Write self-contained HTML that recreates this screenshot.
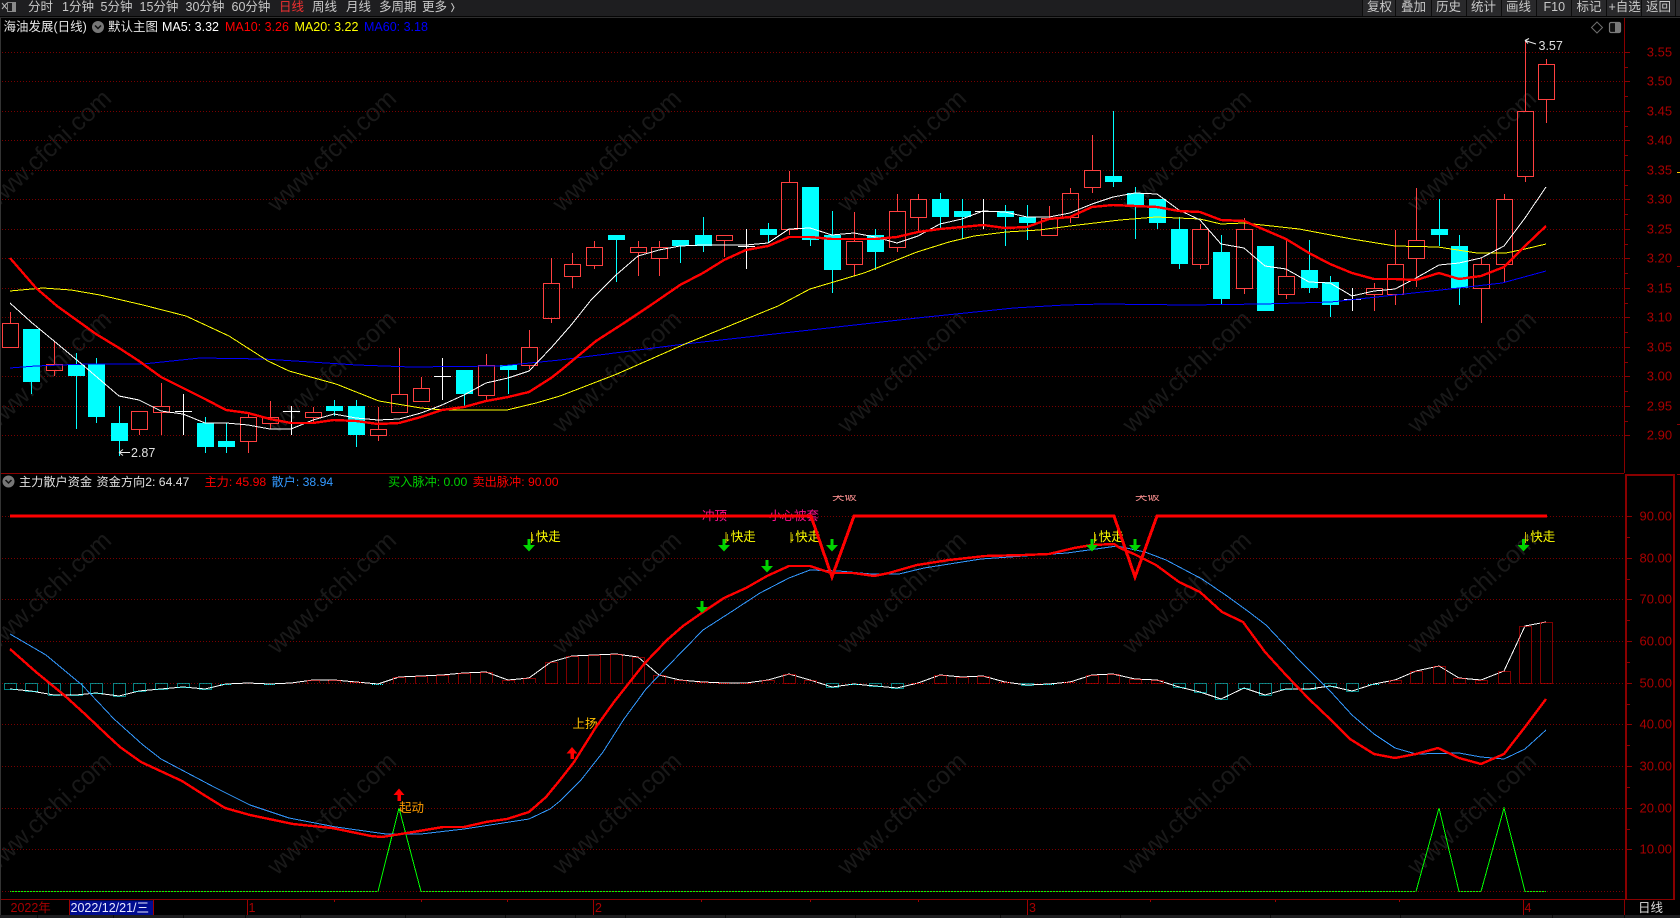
<!DOCTYPE html>
<html lang="zh-CN">
<head>
<meta charset="utf-8">
<title>海油发展(日线)</title>
<style>
html,body{margin:0;padding:0;background:#000;width:1680px;height:918px;overflow:hidden}
svg{display:block;position:absolute;left:0;top:0}
text{font-family:"Liberation Sans","Noto Sans CJK SC",sans-serif;font-size:12.5px;white-space:pre}
.c{shape-rendering:crispEdges}
.tb{fill:#c9c9c9}
.ax{fill:#a80000;font-size:13px}
.wm{fill:#191919;font-size:25px}
.st{font-size:12.2px}
</style>
</head>
<body>
<svg width="1680" height="918" viewBox="0 0 1680 918" xmlns="http://www.w3.org/2000/svg">
<rect width="1680" height="918" fill="#000"/>

<!-- watermarks -->
<g class="wm">
<text class="wm" transform="translate(-8 213) rotate(-43)">www.cfchi.com</text>
<text class="wm" transform="translate(277 213) rotate(-43)">www.cfchi.com</text>
<text class="wm" transform="translate(562 213) rotate(-43)">www.cfchi.com</text>
<text class="wm" transform="translate(847 213) rotate(-43)">www.cfchi.com</text>
<text class="wm" transform="translate(1132 213) rotate(-43)">www.cfchi.com</text>
<text class="wm" transform="translate(1417 213) rotate(-43)">www.cfchi.com</text>
<text class="wm" transform="translate(-8 434) rotate(-43)">www.cfchi.com</text>
<text class="wm" transform="translate(277 434) rotate(-43)">www.cfchi.com</text>
<text class="wm" transform="translate(562 434) rotate(-43)">www.cfchi.com</text>
<text class="wm" transform="translate(847 434) rotate(-43)">www.cfchi.com</text>
<text class="wm" transform="translate(1132 434) rotate(-43)">www.cfchi.com</text>
<text class="wm" transform="translate(1417 434) rotate(-43)">www.cfchi.com</text>
<text class="wm" transform="translate(-8 655) rotate(-43)">www.cfchi.com</text>
<text class="wm" transform="translate(277 655) rotate(-43)">www.cfchi.com</text>
<text class="wm" transform="translate(562 655) rotate(-43)">www.cfchi.com</text>
<text class="wm" transform="translate(847 655) rotate(-43)">www.cfchi.com</text>
<text class="wm" transform="translate(1132 655) rotate(-43)">www.cfchi.com</text>
<text class="wm" transform="translate(1417 655) rotate(-43)">www.cfchi.com</text>
<text class="wm" transform="translate(-8 876) rotate(-43)">www.cfchi.com</text>
<text class="wm" transform="translate(277 876) rotate(-43)">www.cfchi.com</text>
<text class="wm" transform="translate(562 876) rotate(-43)">www.cfchi.com</text>
<text class="wm" transform="translate(847 876) rotate(-43)">www.cfchi.com</text>
<text class="wm" transform="translate(1132 876) rotate(-43)">www.cfchi.com</text>
<text class="wm" transform="translate(1417 876) rotate(-43)">www.cfchi.com</text>
</g>

<!-- grid -->
<path class="c" stroke="#780000" stroke-width="1" stroke-dasharray="1 2" fill="none" d="M2 52.5H1624M2 81.5H1624M2 111.5H1624M2 140.5H1624M2 170.5H1624M2 199.5H1624M2 229.5H1624M2 258.5H1624M2 288.5H1624M2 317.5H1624M2 347.5H1624M2 376.5H1624M2 406.5H1624M2 435.5H1624M2 516.5H1624M2 558.5H1624M2 599.5H1624M2 641.5H1624M2 683.5H1624M2 724.5H1624M2 766.5H1624M2 808.5H1624M2 849.5H1624"/>

<!-- red candles -->
<path class="c" fill="none" stroke="#ff4040" stroke-width="1" d="
M10.5 312V323M2.5 323.5h16v24h-16z
M54.5 342V364M54.5 370V376M46.5 364.5h16v6h-16z
M139.5 429V435M131.5 411.5h16v18h-16z
M161.5 383V406M161.5 412V435M153.5 406.5h16v6h-16z
M248.5 413V417M248.5 441V453M240.5 417.5h16v24h-16z
M270.5 401V417M270.5 423V429M262.5 417.5h16v6h-16z
M313.5 407V412M313.5 417V423M305.5 412.5h16v5h-16z
M378.5 407V429M378.5 435V441M370.5 429.5h16v6h-16z
M399.5 348V394M391.5 394.5h16v18h-16z
M421.5 377V388M413.5 388.5h16v13h-16z
M486.5 354V365M486.5 395V401M478.5 365.5h16v30h-16z
M529.5 330V347M529.5 365V369M521.5 347.5h16v18h-16z
M551.5 258V283M551.5 318V323M543.5 283.5h16v35h-16z
M572.5 253V264M572.5 276V288M564.5 264.5h16v12h-16z
M594.5 241V247M594.5 265V269M586.5 247.5h16v18h-16z
M638.5 241V247M638.5 252V276M630.5 247.5h16v5h-16z
M659.5 241V247M659.5 258V276M651.5 247.5h16v11h-16z
M724.5 240V257M716.5 235.5h16v5h-16z
M789.5 171V182M789.5 229V235M781.5 182.5h16v47h-16z
M854.5 212V241M854.5 264V276M846.5 241.5h16v23h-16z
M897.5 194V211M897.5 247V252M889.5 211.5h16v36h-16z
M918.5 194V199M918.5 217V233M910.5 199.5h16v18h-16z
M1049.5 206V218M1041.5 218.5h16v17h-16z
M1070.5 188V193M1070.5 217V223M1062.5 193.5h16v24h-16z
M1092.5 135V170M1092.5 187V193M1084.5 170.5h16v17h-16z
M1200.5 224V229M1200.5 264V269M1192.5 229.5h16v35h-16z
M1244.5 218V229M1244.5 288V294M1236.5 229.5h16v59h-16z
M1286.5 240V276M1286.5 294V299M1278.5 276.5h16v18h-16z
M1374.5 283V288M1374.5 294V311M1366.5 288.5h16v6h-16z
M1395.5 230V264M1395.5 294V305M1387.5 264.5h16v30h-16z
M1416.5 188V240M1416.5 258V287M1408.5 240.5h16v18h-16z
M1481.5 258V264M1481.5 288V323M1473.5 264.5h16v24h-16z
M1504.5 194V199M1504.5 264V282M1496.5 199.5h16v65h-16z
M1525.5 40V111M1525.5 176V182M1517.5 111.5h16v65h-16z
M1546.5 59V64M1546.5 99V123M1538.5 64.5h16v35h-16z"/>

<!-- cyan candle wicks -->
<path class="c" fill="none" stroke="#00ffff" stroke-width="1" d="M31.5 382V394M76.5 353V429M96.5 358V423M119.5 406V456M205.5 417V453M226.5 423V453M334.5 400V416M356.5 400V447M464.5 394V406M508.5 370V394M616.5 240V282M680.5 246V263M703.5 217V252M768.5 223V243M810.5 240V246M832.5 211V293M875.5 229V270M940.5 193V228M962.5 199V239M1005.5 205V246M1027.5 205V240M1113.5 111V187M1135.5 187V239M1157.5 223V229M1179.5 217V269M1221.5 235V305M1309.5 240V293M1330.5 276V317M1439.5 199V246M1459.5 235V305"/>
<!-- cyan candle bodies -->
<path class="c" fill="#00ffff" d="M23 329h17v53h-17zM68 365h17v11h-17zM88 364h17v53h-17zM111 423h17v18h-17zM197 423h17v24h-17zM218 441h17v6h-17zM326 406h17v5h-17zM348 406h17v29h-17zM456 370h17v24h-17zM500 365h17v5h-17zM608 235h17v5h-17zM672 240h17v6h-17zM695 235h17v11h-17zM760 229h17v6h-17zM802 187h17v53h-17zM824 235h17v35h-17zM867 235h17v17h-17zM932 199h17v18h-17zM954 211h17v6h-17zM997 211h17v6h-17zM1019 217h17v6h-17zM1105 176h17v6h-17zM1127 193h17v12h-17zM1149 199h17v24h-17zM1171 229h17v35h-17zM1213 252h17v47h-17zM1257 246h17v65h-17zM1301 270h17v18h-17zM1322 282h17v23h-17zM1431 229h17v6h-17zM1451 246h17v42h-17z"/>
<!-- white cross candles -->
<path class="c" fill="none" stroke="#ffffff" stroke-width="1" d="M183.5 394V435M175 411.5h17M291.5 406V435M283 411.5h17M442.5 358V400M434 376.5h17M746.5 229V269M738 246.5h17M983.5 199V229M975 211.5h17M1352.5 288V311M1344 299.5h17"/>

<!-- MA60 -->
<polyline class="c" fill="none" stroke="#0000ff" stroke-width="1" points="10,368 36,366 86,364 143,364 200,358 264,359 357,365 411,367 500,366 560,360 685,344 846,326 917,318 1014,308 1065,305 1103,304 1188,305 1263,304 1331,302 1395,295 1459,288 1502,283 1546,271"/>
<!-- MA20 -->
<polyline class="c" fill="none" stroke="#ffff00" stroke-width="1" points="10,291 43,288 71,290 100,295 143,305 186,316 229,336 268,361 289,371 336,384 379,401 421,408 443,410 507,410 536,403 560,396 617,374 685,344 778,306 810,289 864,273 917,252 949,242 974,236 1006,232 1039,230 1078,225 1120,220 1156,217 1200,219 1221,224 1244,223 1299,229 1352,239 1395,246 1438,247 1477,253 1506,253 1525,249 1546,244"/>
<!-- MA5 -->
<polyline class="c" fill="none" stroke="#ffffff" stroke-width="1" points="10,303 31,322 54,341 84,366 119,396 139,400 161,411 183,414 205,423 226,423 248,425 270,429 291,429 313,420 334,414 356,418 378,420 399,419 421,413 442,405 464,395 486,383 508,378 529,371 551,348 572,324 591,300 616,275 638,256 659,250 680,246 703,245 724,245 746,245 768,243 789,229 810,228 832,235 854,233 875,237 897,243 918,236 940,224 962,219 983,211 1005,212 1027,217 1049,217 1070,213 1092,204 1113,197 1135,193 1157,194 1179,210 1200,220 1221,244 1244,248 1265,266 1286,269 1309,282 1330,283 1352,296 1374,291 1395,289 1416,278 1439,265 1459,263 1481,258 1504,246 1525,218 1546,187"/>
<!-- MA10 -->
<polyline class="c" fill="none" stroke="#ff0000" stroke-width="2.4" stroke-linejoin="round" points="10,258 36,288 57,306 96,334 119,348 139,361 161,377 183,388 205,399 226,410 248,413 270,419 291,423 313,423 334,420 356,421 378,424 399,423 421,417 442,410 464,407 486,401 508,397 529,392 551,378 560,371 578,356 596,341 624,323 651,305 680,285 703,273 724,260 746,250 768,246 789,237 810,237 832,239 854,239 875,239 897,237 918,232 940,229 962,227 983,225 1005,228 1027,227 1049,219 1070,217 1092,207 1113,205 1135,206 1157,207 1179,211 1200,212 1221,220 1244,221 1265,230 1286,239 1309,253 1330,264 1352,273 1374,279 1395,279 1416,280 1439,273 1459,279 1481,276 1504,267 1525,246 1546,226"/>

<!-- extremes -->
<path fill="none" stroke="#e8e8e8" stroke-width="1" d="M1525 40.5L1536 44M1525 40.5l4-2M1525 40.5l3 3M119 452.5H130M119 452.5l4-3M119 452.5l4 3"/>
<text x="1538.5" y="50" fill="#e0e0e0">3.57</text>
<text x="131" y="457" fill="#e0e0e0">2.87</text>

<!-- lower panel: white direction line and dotted bars -->
<polyline class="c" fill="none" stroke="#ffffff" stroke-width="1" points="10,689 31,691 54,695 76,695 96,693 119,696 139,691 161,689 183,687 205,689 226,684 248,683 270,684 291,683 313,680 334,680 356,682 378,684 399,677 421,676 442,675 464,673 486,672 508,680 529,678 551,662 572,656 594,655 616,654 638,657 659,675 680,680 703,682 724,683 746,683 768,680 789,674 810,680 832,687 854,684 875,686 897,688 918,683 940,675 962,677 983,676 1005,682 1027,685 1049,684 1070,682 1092,675 1113,674 1135,679 1157,680 1179,687 1200,692 1221,699 1244,688 1265,695 1286,689 1309,689 1330,686 1352,691 1374,684 1395,680 1416,671 1439,666 1459,678 1481,680 1504,671 1525,626 1546,622"/>
<path class="c" fill="none" stroke="#00ffff" stroke-width="1" stroke-dasharray="1 1" d="M4.5 683.5V689.5H16.5V683.5H4.5M25.5 683.5V691.5H37.5V683.5H25.5M48.5 683.5V695.5H60.5V683.5H48.5M70.5 683.5V695.5H82.5V683.5H70.5M90.5 683.5V693.5H102.5V683.5H90.5M113.5 683.5V696.5H125.5V683.5H113.5M133.5 683.5V691.5H145.5V683.5H133.5M155.5 683.5V689.5H167.5V683.5H155.5M177.5 683.5V687.5H189.5V683.5H177.5M199.5 683.5V689.5H211.5V683.5H199.5M220 684.5H232M264 684.5H276M372 684.5H384M826.5 683.5V687.5H838.5V683.5H826.5M848 684.5H860M869.5 683.5V686.5H881.5V683.5H869.5M891.5 683.5V688.5H903.5V683.5H891.5M1021.5 683.5V685.5H1033.5V683.5H1021.5M1043 684.5H1055M1173.5 683.5V687.5H1185.5V683.5H1173.5M1194.5 683.5V692.5H1206.5V683.5H1194.5M1215.5 683.5V699.5H1227.5V683.5H1215.5M1238.5 683.5V688.5H1250.5V683.5H1238.5M1259.5 683.5V695.5H1271.5V683.5H1259.5M1280.5 683.5V689.5H1292.5V683.5H1280.5M1303.5 683.5V689.5H1315.5V683.5H1303.5M1324.5 683.5V686.5H1336.5V683.5H1324.5M1346.5 683.5V691.5H1358.5V683.5H1346.5M1368 684.5H1380"/>
<path class="c" fill="none" stroke="#ff0000" stroke-width="1" stroke-dasharray="1 1" d="M307.5 683.5V680.5H319.5V683.5M328.5 683.5V680.5H340.5V683.5M350 682.5H362M393.5 683.5V677.5H405.5V683.5M415.5 683.5V676.5H427.5V683.5M436.5 683.5V675.5H448.5V683.5M458.5 683.5V673.5H470.5V683.5M480.5 683.5V672.5H492.5V683.5M502.5 683.5V680.5H514.5V683.5M523.5 683.5V678.5H535.5V683.5M545.5 683.5V662.5H557.5V683.5H545.5M566.5 683.5V656.5H578.5V683.5H566.5M588.5 683.5V655.5H600.5V683.5H588.5M610.5 683.5V654.5H622.5V683.5H610.5M632.5 683.5V657.5H644.5V683.5H632.5M653.5 683.5V675.5H665.5V683.5H653.5M674.5 683.5V680.5H686.5V683.5M697 682.5H709M718 683.5H730M740 683.5H752M762.5 683.5V680.5H774.5V683.5M783.5 683.5V674.5H795.5V683.5H783.5M804.5 683.5V680.5H816.5V683.5M912 683.5H924M934.5 683.5V675.5H946.5V683.5H934.5M956.5 683.5V677.5H968.5V683.5M977.5 683.5V676.5H989.5V683.5H977.5M999 682.5H1011M1064 682.5H1076M1086.5 683.5V675.5H1098.5V683.5H1086.5M1107.5 683.5V674.5H1119.5V683.5H1107.5M1129.5 683.5V679.5H1141.5V683.5H1129.5M1151.5 683.5V680.5H1163.5V683.5H1151.5M1389.5 683.5V680.5H1401.5V683.5H1389.5M1410.5 683.5V671.5H1422.5V683.5H1410.5M1433.5 683.5V666.5H1445.5V683.5H1433.5M1453.5 683.5V678.5H1465.5V683.5H1453.5M1475.5 683.5V680.5H1487.5V683.5H1475.5M1498.5 683.5V671.5H1510.5V683.5H1498.5M1519.5 683.5V626.5H1531.5V683.5H1519.5M1540.5 683.5V622.5H1552.5V683.5H1540.5"/>

<!-- labels beneath thick line -->
<text x="702" y="520" fill="#ff0f8c">冲顶</text>
<text x="769" y="520" fill="#ff0f8c">小心被套</text>
<svg x="825" y="495" width="40" height="6" viewBox="0 495 40 6"><text x="7" y="500" fill="#f08a8a">突破</text></svg>
<svg x="1128" y="495" width="40" height="6" viewBox="0 495 40 6"><text x="7" y="500" fill="#f08a8a">突破</text></svg>
<path class="c" stroke="#c8b400" stroke-width="1" d="M531.500 532V543M726 532V543M791 532V543M1094.500 532V543M1525.500 532V543"/>
<text x="529.500" y="541" fill="#ffff00">↓快走</text>
<text x="724.500" y="541" fill="#ffff00">↓快走</text>
<text x="789" y="541" fill="#ffff00">↓快走</text>
<text x="1092.500" y="541" fill="#ffff00">↓快走</text>
<text x="1524" y="541" fill="#ffff00">↓快走</text>
<text x="572.5" y="728" fill="#ffc000">上扬</text>
<text x="399" y="812" fill="#ff9c00">起动</text>

<!-- pulse green -->
<polyline class="c" fill="none" stroke="#00ff00" stroke-width="1" points="10,891.5 378,891.5 399,808 421,891.5 1416,891.5 1439,808 1459,891.5 1481,891.5 1504,808 1525,891.5 1546,891.5"/>
<path class="c" stroke="#780000" stroke-width="1" stroke-dasharray="1 2" fill="none" d="M2 891.5H1624"/>

<!-- 散户 blue -->
<polyline class="c" fill="none" stroke="#3399ff" stroke-width="1" points="10,634 46,655 82,685 114,719 143,745 161,759 214,787 250,805 289,818 336,827 386,834 421,834 464,829 529,819 550,809 560,801 581,780 603,752 624,719 646,689 667,667 703,630 731,612 760,593 789,578 810,570 839,571 871,574 899,574 924,568 981,559 1024,556 1067,553 1096,549 1117,546 1145,552 1166,560 1202,579 1227,596 1249,612 1266,625 1299,660 1331,692 1352,715 1374,734 1395,748 1416,754 1459,753 1481,757 1504,759 1525,749 1546,730"/>
<!-- 主力 red -->
<polyline class="c" fill="none" stroke="#ff0000" stroke-width="2.4" stroke-linejoin="round" points="10,649 36,672 64,695 86,715 107,735 120,747 141,762 182,781 204,795 225,808 250,815 293,824 332,828 371,836 382,837 407,833 443,827 464,827 486,822 507,819 529,812 546,797 560,780 574,762 596,727 614,702 644,664 667,640 683,626 703,612 724,598 746,588 767,576 789,566 810,566 831,573 853,573 874,576 889,573 917,565 949,560 985,556 1024,555 1049,554 1074,548 1092,545 1114,544 1120,548 1134,554 1156,565 1179,582 1200,592 1222,612 1243,622 1265,652 1286,675 1309,699 1331,720 1350,739 1374,754 1395,758 1416,754 1438,748 1459,758 1481,764 1504,754 1525,727 1546,699"/>
<!-- 90 line -->
<polyline class="c" fill="none" stroke="#ff0000" stroke-width="3" points="10,516 811,516 832,577 854,516 1114,516 1135,577 1157,516 1547,516"/>

<!-- green arrows -->
<path fill="#00d400" d="M527.5 539h3v6h4.5l-6 6.5-6-6.5h4.5zM722.5 539h3v6h4.5l-6 6.5-6-6.5h4.5zM830.5 539h3v6h4.5l-6 6.5-6-6.5h4.5zM1090.5 539h3v6h4.5l-6 6.5-6-6.5h4.5zM1133.5 539h3v6h4.5l-6 6.5-6-6.5h4.5zM1522 539h3v6h4.5l-6 6.5-6-6.5h4.5zM765.5 560h3v6h4.5l-6 6.5-6-6.5h4.5zM700.5 601h3v6h4.5l-6 6-6-6h4.5z"/>
<!-- red up arrows -->
<path fill="#ff0000" d="M399 788.5l5.5 6.5H401v6h-3.5v-6H393.500zM572 747l5.500 6.500H574v5.500h-3.500v-5.500H566.500z"/>

<!-- separators / axes -->
<path class="c" fill="none" stroke="#8a0000" stroke-width="1" d="M0 473.500H1624M0 899.500H1675M1624.500 18V473"/>
<path class="c" fill="none" stroke="#8a0000" stroke-width="2" d="M1626 474.500V899M1625 475H1675M1674 474V899"/>
<path class="c" fill="none" stroke="#8a0000" stroke-width="1" d="M1625 52.500h5M1625 67.500h3M1625 81.500h5M1625 96.500h3M1625 111.500h5M1625 126.500h3M1625 140.500h5M1625 155.500h3M1625 170.500h5M1625 185.500h3M1625 199.500h5M1625 214.500h3M1625 229.500h5M1625 244.500h3M1625 258.500h5M1625 273.500h3M1625 288.500h5M1625 303.500h3M1625 317.500h5M1625 332.500h3M1625 347.500h5M1625 362.500h3M1625 376.500h5M1625 391.500h3M1625 406.500h5M1625 421.500h3M1625 435.500h5M1627 516.500h5M1627 537.500h3M1627 558.500h5M1627 579.500h3M1627 599.500h5M1627 620.500h3M1627 641.500h5M1627 662.500h3M1627 683.500h5M1627 704.500h3M1627 724.500h5M1627 745.500h3M1627 766.500h5M1627 787.500h3M1627 808.500h5M1627 829.500h3M1627 849.500h5M1624.500 900V915M1677 266.500h3M1677 424.500h3M1677 474.500h3"/>
<path class="c" stroke="#ffcc00" d="M1677 172.500h3"/>
<rect x="0" y="18" width="1" height="897" fill="#333"/>

<!-- axis labels -->
<text class="ax" x="1646.800" y="56.500">3.55</text>
<text class="ax" x="1646.800" y="85.500">3.50</text>
<text class="ax" x="1646.800" y="115.500">3.45</text>
<text class="ax" x="1646.800" y="144.500">3.40</text>
<text class="ax" x="1646.800" y="174.500">3.35</text>
<text class="ax" x="1646.800" y="203.500">3.30</text>
<text class="ax" x="1646.800" y="233.500">3.25</text>
<text class="ax" x="1646.800" y="262.500">3.20</text>
<text class="ax" x="1646.800" y="292.500">3.15</text>
<text class="ax" x="1646.800" y="321.500">3.10</text>
<text class="ax" x="1646.800" y="351.500">3.05</text>
<text class="ax" x="1646.800" y="380.500">3.00</text>
<text class="ax" x="1646.800" y="410.500">2.95</text>
<text class="ax" x="1646.800" y="439.500">2.90</text>
<text class="ax" x="1639.500" y="520.500">90.00</text>
<text class="ax" x="1639.500" y="562.500">80.00</text>
<text class="ax" x="1639.500" y="603.500">70.00</text>
<text class="ax" x="1639.500" y="645.500">60.00</text>
<text class="ax" x="1639.500" y="687.500">50.00</text>
<text class="ax" x="1639.500" y="728.500">40.00</text>
<text class="ax" x="1639.500" y="770.500">30.00</text>
<text class="ax" x="1639.500" y="812.500">20.00</text>
<text class="ax" x="1639.500" y="853.500">10.00</text>

<!-- toolbar -->
<rect x="0" y="0" width="1680" height="16" fill="#1e1e20"/>
<rect x="0" y="16" width="1680" height="1" fill="#050505"/>
<rect x="0" y="17" width="1680" height="1" fill="#2e2e2e"/>
<path fill="none" stroke="#b5b5b5" stroke-width="1" d="M2 3l5 6M7 3L2 9"/>
<rect x="7.500" y="2.500" width="8" height="9" fill="none" stroke="#8a8a8a"/>
<rect x="12" y="3" width="3" height="8" fill="#8a8a8a"/>
<text class="tb" x="28" y="11">分时</text>
<text class="tb" x="62" y="11">1分钟</text>
<text class="tb" x="100.500" y="11">5分钟</text>
<text class="tb" x="139.500" y="11">15分钟</text>
<text class="tb" x="185.500" y="11">30分钟</text>
<text class="tb" x="231.500" y="11">60分钟</text>
<text x="279" y="11" fill="#f03030">日线</text>
<text class="tb" x="312" y="11">周线</text>
<text class="tb" x="346" y="11">月线</text>
<text class="tb" x="379" y="11">多周期</text>
<text class="tb" x="422" y="11">更多</text>
<path fill="none" stroke="#c9c9c9" d="M451.500 3l2.500 4.500-2.500 4.500"/>
<rect x="1362" y="0" width="318" height="16" fill="#29292b"/>
<path class="c" stroke="#0c0c0c" stroke-width="1" d="M1362.500 0V16M1395.500 0V16M1431.500 0V16M1466.500 0V16M1501.500 0V16M1536.500 0V16M1571.500 0V16M1606.500 0V16M1641.500 0V16M1675.500 0V16"/>
<text class="tb" x="1367" y="11">复权</text>
<text class="tb" x="1401" y="11">叠加</text>
<text class="tb" x="1436" y="11">历史</text>
<text class="tb" x="1471" y="11">统计</text>
<text class="tb" x="1506" y="11">画线</text>
<text class="tb" x="1543.500" y="11">F10</text>
<text class="tb" x="1576.500" y="11">标记</text>
<text class="tb" x="1608.500" y="11">+自选</text>
<text class="tb" x="1646" y="11">返回</text>

<!-- title row -->
<text x="3.500" y="31" fill="#e6e6e6">海油发展(日线)</text>
<circle cx="98" cy="27" r="6" fill="#777"/>
<path fill="none" stroke="#111" stroke-width="1.500" d="M95 25.500l3 3 3-3"/>
<text x="108" y="31" fill="#e6e6e6">默认主图</text>
<text x="162" y="31" fill="#ffffff">MA5: 3.32</text>
<text x="225" y="31" fill="#ff0000">MA10: 3.26</text>
<text x="294.500" y="31" fill="#ffff00">MA20: 3.22</text>
<text x="364" y="31" fill="#0000ff">MA60: 3.18</text>
<path fill="none" stroke="#6e6e6e" d="M1597 22l5.500 5.500-5.500 5.500-5.500-5.500z"/>
<rect x="1609.500" y="22.500" width="11" height="10" rx="1.500" fill="#111" stroke="#7a7a7a" stroke-width="1.200"/>
<rect x="1615" y="23" width="5" height="9" fill="#7a7a7a"/>

<!-- indicator title -->
<circle cx="8.500" cy="481.500" r="6" fill="#777"/>
<path fill="none" stroke="#111" stroke-width="1.500" d="M5.500 480l3 3 3-3"/>
<text class="st" x="19" y="486" fill="#e0e0e0">主力散户资金</text>
<text class="st" x="96.500" y="486" fill="#e0e0e0">资金方向2: 64.47</text>
<text class="st" x="204.500" y="486" fill="#ff0000">主力: 45.98</text>
<text class="st" x="271.500" y="486" fill="#3399ff">散户: 38.94</text>
<text class="st" x="388" y="486" fill="#00d000">买入脉冲: 0.00</text>
<text class="st" x="472.500" y="486" fill="#ff0000">卖出脉冲: 90.00</text>

<!-- time axis -->
<text x="10.500" y="912" fill="#a80000">2022年</text>
<rect x="69.500" y="900.500" width="84" height="14.500" fill="#000c8f"/>
<path class="c" stroke="#a00000" d="M69.500 900V915M153.500 900V915M247.500 900V915M593.500 900V915M1027.500 900V915M1523.500 900V915M334.500 900v2M421.500 900v2M507.500 900v2M701.500 900v2M810.500 900v2M918.500 900v2M1150.500 900v2M1275.500 900v2M1399.500 900v2"/>
<text x="70.500" y="912" fill="#e8e8ff">2022/12/21/三</text>
<text x="248.500" y="912" fill="#a80000">1</text>
<text x="595" y="912" fill="#a80000">2</text>
<text x="1029" y="912" fill="#a80000">3</text>
<text x="1524.500" y="912" fill="#a80000">4</text>
<text x="1638" y="912" fill="#dcdcdc">日线</text>
<rect x="0" y="915" width="1680" height="3" fill="#1e1e20"/>
<path class="c" stroke="#0a0a0a" d="M37.500 915v3M113.500 915v3M183.500 915v3M245.500 915v3M300.500 915v3M405.500 915v3M505.500 915v3M575.500 915v3M625.500 915v3M725.500 915v3M855.500 915v3M1000.500 915v3M1120.500 915v3M1270.500 915v3M1400.500 915v3M1552.500 915v3M1624.500 915v3"/>
</svg>
</body>
</html>
